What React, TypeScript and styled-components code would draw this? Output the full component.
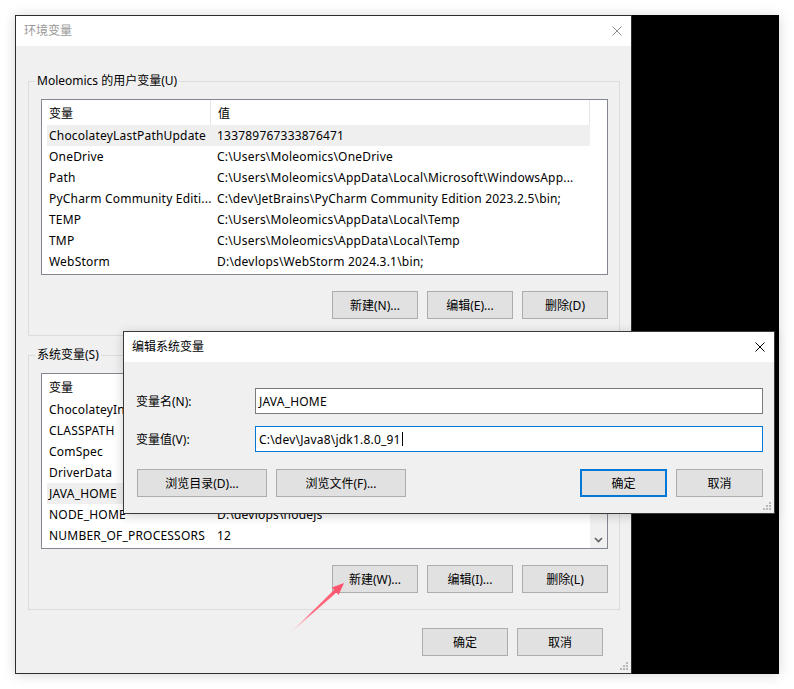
import React from "react";
import styled, { createGlobalStyle } from "styled-components";

const GlobalStyle = createGlobalStyle`
  html, body { margin: 0; padding: 0; background: #fff; }
  body {
    font-family: "Microsoft YaHei UI", "Noto Sans", "Noto Sans CJK SC", sans-serif;
    font-size: 12px;
    color: #000;
  }
  * { box-sizing: border-box; }
`;

const Stage = styled.div`
  position: relative;
  width: 794px;
  height: 689px;
  padding: 15px;
`;

const Frame = styled.div`
  display: flex;
  width: 764px;
  height: 659px;
  box-shadow: 0 1px 12px rgba(0, 0, 0, 0.16);
`;

const Window = styled.div`
  position: relative;
  width: 617px;
  height: 100%;
  border: 1px solid #2e2e2e;
  background: #f0f0f0;
  display: flex;
  flex-direction: column;
`;

const BlackPanel = styled.div`
  width: 147px;
  height: 100%;
  background: #000;
`;

const TitleBar = styled.div<{ $active?: boolean }>`
  height: 30px;
  flex: none;
  background: #fff;
  display: flex;
  align-items: center;
  justify-content: space-between;
  padding: 0 9px 0 8px;
  color: ${(p) => (p.$active ? "#000" : "#999")};
  line-height: 16px;
`;

const CloseIcon = styled.svg<{ $active?: boolean }>`
  width: 10px;
  height: 10px;
  stroke: ${(p) => (p.$active ? "#000" : "#8c8c8c")};
  stroke-width: 1;
  fill: none;
`;

const Body = styled.div`
  flex: 1;
  padding: 27px 11px 0 12px;
  display: flex;
  flex-direction: column;
`;

const Group = styled.fieldset<{ $top?: number }>`
  margin: ${(p) => p.$top ?? 0}px 0 0 0;
  padding: 10px 11px 16px 12px;
  border: 1px solid #dcdcdc;
  min-width: 0;
`;

const Legend = styled.legend`
  margin-left: -6px;
  padding: 0 2px;
  line-height: 16px;
  height: 16px;
`;

const ListBox = styled.div`
  height: 176px;
  border: 1px solid #828790;
  background: #fff;
  display: flex;
  overflow: hidden;
`;

const ListMain = styled.div`
  width: 548px;
  flex: none;
  display: flex;
  flex-direction: column;
`;

const HeaderRow = styled.div`
  display: grid;
  grid-template-columns: 169px 379px;
  height: 25px;
  flex: none;
`;

const HeaderCell = styled.div`
  border-right: 1px solid #e5e5e5;
  padding-left: 7px;
  display: flex;
  align-items: center;
`;

const Row = styled.div<{ $selected?: boolean }>`
  display: grid;
  grid-template-columns: 164px 1fr;
  height: 21px;
  flex: none;
  margin-left: 5px;
  align-items: center;
  white-space: nowrap;
  letter-spacing: 0.2px;
  background: ${(p) => (p.$selected ? "#efefef" : "transparent")};
`;

const NameCell = styled.span`
  padding-left: 2px;
  overflow: hidden;
`;

const ValueCell = styled.span`
  padding-left: 6px;
  overflow: hidden;
`;

const ScrollStrip = styled.div<{ $active?: boolean }>`
  width: 17px;
  flex: none;
  background: ${(p) => (p.$active ? "#f0f0f0" : "#fff")};
  display: flex;
  flex-direction: column;
  justify-content: space-between;
  align-items: center;
`;

const ScrollArrow = styled.svg`
  width: 17px;
  height: 17px;
  fill: none;
  stroke: #606060;
  stroke-width: 1.6;
`;

const ButtonRow = styled.div<{ $top: number; $right?: number }>`
  display: flex;
  justify-content: flex-end;
  gap: 9px;
  margin-top: ${(p) => p.$top}px;
  margin-right: ${(p) => p.$right ?? 0}px;
`;

const Button = styled.div<{ $w?: number; $h?: number; $primary?: boolean }>`
  width: ${(p) => p.$w ?? 86}px;
  height: ${(p) => p.$h ?? 28}px;
  background: #e1e1e1;
  border: ${(p) => (p.$primary ? "2px solid #0078d7" : "1px solid #adadad")};
  display: flex;
  align-items: center;
  justify-content: center;
  white-space: nowrap;
`;

const Grip = styled.svg`
  position: absolute;
  right: 3px;
  bottom: 3px;
  width: 8px;
  height: 8px;
  fill: #b8b8b8;
`;

const Dialog = styled.div`
  position: absolute;
  left: 123px;
  top: 331px;
  width: 652px;
  height: 183px;
  border: 1px solid #3a3a3a;
  background: #f0f0f0;
  display: flex;
  flex-direction: column;
  box-shadow: 0 2px 10px rgba(0, 0, 0, 0.18);
`;

const DialogBody = styled.div`
  flex: 1;
  padding: 26px 11px 0 12px;
  display: flex;
  flex-direction: column;
`;

const FieldGrid = styled.div`
  display: grid;
  grid-template-columns: 119px 1fr;
  row-gap: 12px;
  align-items: center;
`;

const FieldLabel = styled.div`
  margin-top: -1px;
`;

const InputBox = styled.div<{ $focused?: boolean }>`
  height: 26px;
  border: 1px solid ${(p) => (p.$focused ? "#0078d7" : "#7a7a7a")};
  background: #fff;
  padding-left: 3px;
  display: flex;
  align-items: center;
  white-space: nowrap;
  letter-spacing: 0.2px;
`;

const Caret = styled.span`
  display: inline-block;
  width: 1px;
  height: 14px;
  margin-left: 1px;
  background: #000;
`;

const DialogButtons = styled.div`
  display: flex;
  gap: 9px;
  margin-top: 17px;
  padding-left: 1px;
`;

const Spacer = styled.div`
  flex: 1;
`;

const ArrowOverlay = styled.svg`
  position: absolute;
  left: 0;
  top: 0;
  pointer-events: none;
`;

type Item = { name: string; value: string; selected?: boolean };

const userVars: Item[] = [
  { name: "ChocolateyLastPathUpdate", value: "133789767333876471", selected: true },
  { name: "OneDrive", value: "C:\\Users\\Moleomics\\OneDrive" },
  { name: "Path", value: "C:\\Users\\Moleomics\\AppData\\Local\\Microsoft\\WindowsApp..." },
  { name: "PyCharm Community Editi...", value: "C:\\dev\\JetBrains\\PyCharm Community Edition 2023.2.5\\bin;" },
  { name: "TEMP", value: "C:\\Users\\Moleomics\\AppData\\Local\\Temp" },
  { name: "TMP", value: "C:\\Users\\Moleomics\\AppData\\Local\\Temp" },
  { name: "WebStorm", value: "D:\\devlops\\WebStorm 2024.3.1\\bin;" },
];

// Values of the upper system rows are covered by the edit dialog in the screenshot.
const sysVars: Item[] = [
  { name: "ChocolateyInstall", value: "" },
  { name: "CLASSPATH", value: "" },
  { name: "ComSpec", value: "" },
  { name: "DriverData", value: "" },
  { name: "JAVA_HOME", value: "", selected: true },
  { name: "NODE_HOME", value: "D:\\devlops\\nodejs" },
  { name: "NUMBER_OF_PROCESSORS", value: "12" },
];

const Close = ({ active }: { active?: boolean }) => (
  <CloseIcon $active={active} viewBox="0 0 10 10">
    <path d="M0.5 0.5 L9.5 9.5 M9.5 0.5 L0.5 9.5" />
  </CloseIcon>
);

const GripDots = () => (
  <Grip viewBox="0 0 8 8">
    <rect x="6" y="0" width="2" height="2" />
    <rect x="3" y="3" width="2" height="2" />
    <rect x="6" y="3" width="2" height="2" />
    <rect x="0" y="6" width="2" height="2" />
    <rect x="3" y="6" width="2" height="2" />
    <rect x="6" y="6" width="2" height="2" />
  </Grip>
);

const VarList = ({ items, scroll }: { items: Item[]; scroll?: boolean }) => (
  <ListBox>
    <ListMain>
      <HeaderRow>
        <HeaderCell>变量</HeaderCell>
        <HeaderCell>{scroll ? "" : "值"}</HeaderCell>
      </HeaderRow>
      {items.map((it) => (
        <Row key={it.name} $selected={it.selected}>
          <NameCell>{it.name}</NameCell>
          <ValueCell>{it.value}</ValueCell>
        </Row>
      ))}
    </ListMain>
    <ScrollStrip $active={scroll}>
      {scroll && (
        <>
          <ScrollArrow viewBox="0 0 17 17">
            <path d="M5 10 L8.5 6.5 L12 10" />
          </ScrollArrow>
          <ScrollArrow viewBox="0 0 17 17">
            <path d="M5 7 L8.5 10.5 L12 7" />
          </ScrollArrow>
        </>
      )}
    </ScrollStrip>
  </ListBox>
);

export default function App() {
  return (
    <>
      <GlobalStyle />
      <Stage>
        <Frame>
          <Window>
            <TitleBar>
              <span>环境变量</span>
              <Close />
            </TitleBar>
            <Body>
              <Group>
                <Legend>Moleomics 的用户变量(U)</Legend>
                <VarList items={userVars} />
                <ButtonRow $top={16}>
                  <Button>新建(N)...</Button>
                  <Button>编辑(E)...</Button>
                  <Button>删除(D)</Button>
                </ButtonRow>
              </Group>
              <Group $top={11}>
                <Legend>系统变量(S)</Legend>
                <VarList items={sysVars} scroll />
                <ButtonRow $top={16}>
                  <Button>新建(W)...</Button>
                  <Button>编辑(I)...</Button>
                  <Button>删除(L)</Button>
                </ButtonRow>
              </Group>
              <ButtonRow $top={18} $right={17}>
                <Button>确定</Button>
                <Button>取消</Button>
              </ButtonRow>
            </Body>
            <GripDots />
          </Window>
          <BlackPanel />
        </Frame>

        <Dialog>
          <TitleBar $active>
            <span>编辑系统变量</span>
            <Close active />
          </TitleBar>
          <DialogBody>
            <FieldGrid>
              <FieldLabel>变量名(N):</FieldLabel>
              <InputBox>JAVA_HOME</InputBox>
              <FieldLabel>变量值(V):</FieldLabel>
              <InputBox $focused>
                C:\dev\Java8\jdk1.8.0_91
                <Caret />
              </InputBox>
            </FieldGrid>
            <DialogButtons>
              <Button $w={130}>浏览目录(D)...</Button>
              <Button $w={130}>浏览文件(F)...</Button>
              <Spacer />
              <Button $w={87} $primary>确定</Button>
              <Button $w={87}>取消</Button>
            </DialogButtons>
          </DialogBody>
          <GripDots />
        </Dialog>

        <ArrowOverlay width="794" height="689" viewBox="0 0 794 689">
          <defs>
            <linearGradient id="arrowFade" gradientUnits="userSpaceOnUse" x1="287" y1="636" x2="344" y2="583">
              <stop offset="0" stopColor="#ff6b80" stopOpacity="0" />
              <stop offset="0.45" stopColor="#ff5c74" stopOpacity="0.85" />
              <stop offset="1" stopColor="#ff4d68" stopOpacity="1" />
            </linearGradient>
          </defs>
          <polygon
            points="287,636 334,589.9 331.8,587.5 344,583 338.6,594.9 336.4,592.5"
            fill="url(#arrowFade)"
          />
        </ArrowOverlay>
      </Stage>
    </>
  );
}
